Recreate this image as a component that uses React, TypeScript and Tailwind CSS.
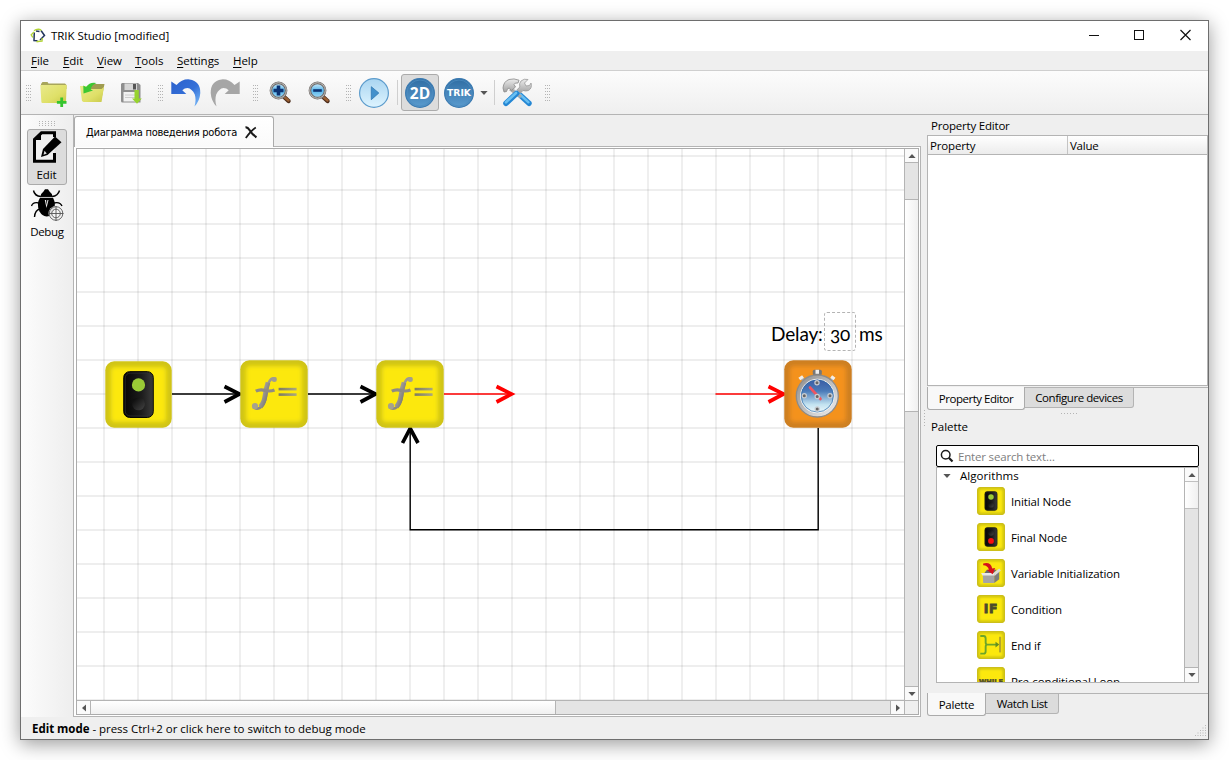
import React from "react";

const ARROW_POINTS: Record<string, string> = {
  up: "0,5 4.5,0 9,5",
  down: "0,0 9,0 4.5,5",
  left: "5,0 5,9 0,4.5",
  right: "0,0 5,4.5 0,9",
};

function Arrow({ dir }: { dir: "up" | "down" | "left" | "right" }) {
  const vertical = dir === "up" || dir === "down";
  const w = vertical ? 9 : 5;
  const h = vertical ? 5 : 9;
  return (
    <svg width={vertical ? 8 : 4} height={vertical ? 4 : 8} viewBox={`0 0 ${w} ${h}`} className="block">
      <polygon points={ARROW_POINTS[dir]} fill="#555" />
    </svg>
  );
}

function Dots({ cols, rows, dx, dy, className = "" }: { cols: number; rows: number; dx: number; dy: number; className?: string }) {
  const cells: React.ReactNode[] = [];
  for (let r = 0; r < rows; r++)
    for (let c = 0; c < cols; c++) cells.push(<rect key={`${r}-${c}`} x={c * dx} y={r * dy} width="1" height="1" fill="#b4b4b4" />);
  return (
    <svg width={(cols - 1) * dx + 1} height={(rows - 1) * dy + 1} className={`block shrink-0 ${className}`}>
      {cells}
    </svg>
  );
}

function Grip({ className = "" }: { className?: string }) {
  return <Dots cols={3} rows={6} dx={2} dy={3} className={className} />;
}

function Defs() {
  return (
    <svg width="0" height="0" className="absolute">
      <defs>
        <filter id="soft" x="-20%" y="-20%" width="140%" height="140%">
          <feGaussianBlur stdDeviation="2" />
        </filter>
        <linearGradient id="folder" x1="0" y1="0" x2="1" y2="1">
          <stop offset="0" stopColor="#e9ea8c" />
          <stop offset="0.6" stopColor="#dfe068" />
          <stop offset="1" stopColor="#c9c94a" />
        </linearGradient>
        <linearGradient id="undo" x1="0" y1="0" x2="1" y2="1">
          <stop offset="0" stopColor="#2b60cc" />
          <stop offset="0.55" stopColor="#3470d8" />
          <stop offset="1" stopColor="#7fc0fb" />
        </linearGradient>
        <linearGradient id="lens" x1="0" y1="0" x2="0" y2="1">
          <stop offset="0" stopColor="#d9f0fb" />
          <stop offset="0.5" stopColor="#55b4ea" />
          <stop offset="1" stopColor="#a5dcf7" />
        </linearGradient>
        <linearGradient id="play" x1="0" y1="0" x2="0" y2="1">
          <stop offset="0" stopColor="#a9d5f1" />
          <stop offset="1" stopColor="#def4ff" />
        </linearGradient>
        <linearGradient id="badge" x1="0" y1="0" x2="0" y2="1">
          <stop offset="0" stopColor="#2f6da3" />
          <stop offset="1" stopColor="#5b9ccf" />
        </linearGradient>
        <linearGradient id="steel" x1="0" y1="0" x2="0" y2="1">
          <stop offset="0" stopColor="#ececec" />
          <stop offset="1" stopColor="#a2a2a2" />
        </linearGradient>
        <linearGradient id="glyph" x1="0" y1="0" x2="1" y2="1">
          <stop offset="0" stopColor="#bcb9b2" />
          <stop offset="0.5" stopColor="#96928c" />
          <stop offset="1" stopColor="#6c6c66" />
        </linearGradient>
        <linearGradient id="bar" x1="0" y1="0" x2="1" y2="0">
          <stop offset="0" stopColor="#7d7b60" />
          <stop offset="1" stopColor="#aaa87e" />
        </linearGradient>
        <linearGradient id="lamp" x1="0" y1="0" x2="1" y2="0">
          <stop offset="0" stopColor="#050505" />
          <stop offset="0.6" stopColor="#1c1c1c" />
          <stop offset="1" stopColor="#3c3c3c" />
        </linearGradient>
        <linearGradient id="bulb" x1="0" y1="0" x2="1" y2="1">
          <stop offset="0" stopColor="#050505" />
          <stop offset="1" stopColor="#444" />
        </linearGradient>
        <linearGradient id="rim" x1="0" y1="0" x2="1" y2="1">
          <stop offset="0" stopColor="#8a8a8a" />
          <stop offset="0.5" stopColor="#bdbdbd" />
          <stop offset="1" stopColor="#f4f4f4" />
        </linearGradient>
        <linearGradient id="dial" x1="0" y1="0" x2="0" y2="1">
          <stop offset="0.05" stopColor="#3c5fa6" />
          <stop offset="0.35" stopColor="#4a7ab8" />
          <stop offset="0.75" stopColor="#c2e2f0" />
          <stop offset="1" stopColor="#eef9fc" />
        </linearGradient>
      </defs>
    </svg>
  );
}

/* Toolbar icons */

function NewIcon() {
  return (
    <svg width="32" height="32" viewBox="0 0 32 32">
      <path d="M3 7 L4.500 5 H9.500 L10.500 6.500 H27 L28.500 8 V12 H3 Z" fill="#a8a65a" />
      <path d="M2.300 8 H28.700 L28 24.800 Q27.900 26 27 26 H4.500 Q3.500 26 3.400 25 Z" fill="url(#folder)" />
      <path d="M23.700 20.500 V30 M18.900 25.300 H28.500" stroke="#35c42e" strokeWidth="2.800" fill="none" />
    </svg>
  );
}

function OpenIcon() {
  return (
    <svg width="30" height="32" viewBox="0 0 30 32">
      <path d="M13 7 H26.500 L23 24 H10 Z" fill="#a09c50" />
      <path d="M2 9 H8 L11 12 H23.500 L26 10 L23.500 25 H5.500 L4 24 Z" fill="url(#folder)" />
      <path d="M5.500 16.500 L5.300 8.500 L8 10 Q12 4.500 18.500 6 Q13 8 12.800 12.500 L15 13.500 Z" fill="#3cc832" />
    </svg>
  );
}

function SaveIcon() {
  return (
    <svg width="26" height="32" viewBox="0 0 26 32">
      <path d="M4 6 H20 L22.500 8 V25.500 H4.500 Q3 25.500 3 24 V7 Z" fill="#8e8e8e" />
      <rect x="6.500" y="6.500" width="12.500" height="6.500" fill="#d6d6d6" />
      <rect x="15" y="7" width="3" height="5.500" fill="#555" />
      <rect x="5.500" y="15" width="14.500" height="9.500" fill="#f1f1f1" />
      <path d="M7 18 H18 M7 20.500 H18" stroke="#ccc" />
      <path d="M16.500 13 H20.800 V21.500 H23.800 L19 26.800 L14 21.500 H16.500 Z" fill="#96d32e" />
    </svg>
  );
}

function UndoIcon({ flip = false }: { flip?: boolean }) {
  return (
    <svg width="32" height="32" viewBox="0 0 32 32">
      <path
        transform={flip ? "translate(32 0) scale(-1 1)" : undefined}
        d="M1.300 4.500 L6.500 8 Q12 1.800 19.500 2.400 Q30.500 4 30.300 16 Q29.800 24 24.500 29.500 Q26.500 23 24.800 17.500 Q22 11.500 17.500 11 Q14.500 11 12.300 13.300 L16.300 17 H1.300 Z"
        fill={flip ? "#a6a6a6" : "url(#undo)"}
      />
    </svg>
  );
}

function ZoomIcon({ plus = false }: { plus?: boolean }) {
  return (
    <svg width="24" height="26" viewBox="0 0 24 26">
      <path d="M14 15 L20.500 21" stroke="#4a2a18" strokeWidth="4.400" strokeLinecap="round" />
      <path d="M17 17.500 L20.500 20.500" stroke="#9a6034" strokeWidth="2.500" strokeLinecap="round" />
      <path d="M14 15 L16.500 17.300" stroke="#777" strokeWidth="3.500" />
      <circle cx="10.500" cy="10.500" r="7.600" fill="url(#lens)" stroke="#6e6a68" strokeWidth="2.600" />
      <circle cx="10.500" cy="10.500" r="7.800" fill="none" stroke="#c4c0bc" strokeWidth="1" />
      <path d={plus ? "M5.500 10.500 H15.500 M10.500 5.500 V15.500" : "M6.200 10.500 H14.800"} stroke="#0c3273" strokeWidth={plus ? 3.600 : 2.600} />
    </svg>
  );
}

function PlayIcon() {
  return (
    <svg width="32" height="32" viewBox="0 0 32 32">
      <circle cx="16" cy="16" r="14.400" fill="url(#play)" stroke="#5d9ccc" strokeWidth="1.200" />
      <path d="M13.300 9.700 L20.800 16 L13.300 22.700 Z" fill="#4391cc" stroke="#2f78b4" strokeWidth="0.800" />
    </svg>
  );
}

function Badge({ text, size, family }: { text: string; size: number; family: string }) {
  return (
    <svg width="32" height="32" viewBox="0 0 32 32">
      <circle cx="16" cy="16" r="14.400" fill="url(#badge)" stroke="#3c7bb1" strokeWidth="1.200" />
      <circle cx="16" cy="16" r="13" fill="none" stroke="#4d8bbf" strokeWidth="0.800" />
      <text x="16" y={16 + size * 0.36} textAnchor="middle" fontFamily={family} fontWeight="bold" fontSize={size} letterSpacing="0" fill="#fff">
        {text}
      </text>
    </svg>
  );
}

function ToolsIcon() {
  return (
    <svg width="32" height="32" viewBox="0 0 32 32">
      <path d="M12 11 L15.500 14 L19 17 L16 20 L10 14 Z" fill="#c8c8c8" />
      <path d="M19 18 L28 26.300" stroke="#2487d4" strokeWidth="5.400" strokeLinecap="round" />
      <path d="M19 17.500 L27.500 25.300" stroke="#69bff2" strokeWidth="2.400" strokeLinecap="round" />
      <path d="M9 12 L20 20" stroke="#a8a8a8" strokeWidth="3" />
      <path d="M2 11 Q2.500 4.500 8 2.500 Q13 1 18 3.200 L17 6 Q13.500 5.500 13 7.500 L14.500 10 L10.500 13.500 L8.500 11.300 Q6.500 10 5.500 14.500 L3 15 Z" fill="url(#steel)" stroke="#888" strokeWidth="0.800" />
      <path d="M20 4 Q23 1.300 27 2.500 L23.500 6 L25 9 L28.500 8.500 L30 6 Q31.500 11 27.500 13.500 Q24.500 14.500 22 13.500 L19.500 16 L16 12.800 L18.800 10 Q17.800 6.500 20 4 Z" fill="url(#steel)" stroke="#999" strokeWidth="0.800" />
      <path d="M15.500 16.500 L5 26.300" stroke="#2487d4" strokeWidth="5.600" strokeLinecap="round" />
      <path d="M15 16 L5 25.300" stroke="#69bff2" strokeWidth="2.600" strokeLinecap="round" />
    </svg>
  );
}

function Sep() {
  return <div className="h-[25px] w-px shrink-0 bg-[#cfcfcf]" />;
}

/* Block icons share one 68 by 68 drawing */

function Block({ size, kind, className = "" }: { size: number; kind: string; className?: string }) {
  const orange = kind === "timer";
  const small = size < 40;
  return (
    <svg width={size} height={size} viewBox="0 0 68 68" className={`block shrink-0 ${className}`}>
      <rect x="0.300" y="0.300" width="67.400" height="67.400" rx="9" fill={orange ? "#cd7f22" : "#d0c417"} />
      <rect x="6" y="6" width="56" height="56" rx="4" fill={orange ? "#f4921f" : "#fce80b"} filter="url(#soft)" />
      {small && <rect x="1.300" y="1.300" width="65.400" height="65.400" rx="8" fill="none" stroke="#cdbf1a" strokeWidth="2.500" />}
      {(kind === "start" || kind === "end") && (
        <g>
          <rect x="19" y="10.800" width="30" height="46.500" rx="6" fill="url(#lamp)" stroke="#000" />
          <rect x="20.500" y="12.300" width="27" height="43.500" rx="5" fill="none" stroke="#333" strokeWidth="0.700" />
          <circle cx="34" cy="24.300" r="6.700" fill={kind === "start" ? "#9acb36" : "url(#bulb)"} />
          <circle cx="34" cy="43.500" r={kind === "end" ? 7 : 6.500} fill={kind === "end" ? "#fa0d0d" : "url(#bulb)"} />
        </g>
      )}
      {kind === "func" && (
        <g>
          <path d="M36 19 Q31.500 17 29 22 Q27 27 26 36 Q24.500 45.500 19.500 48 Q16 49.500 13 47" fill="none" stroke="url(#glyph)" strokeWidth="2.600" />
          <path d="M28 22.500 Q26 28 25 36 Q24 43 20.300 46.800" fill="none" stroke="url(#glyph)" strokeWidth="4.800" />
          <circle cx="34.300" cy="19.600" r="2.500" fill="#a19d90" />
          <circle cx="15" cy="46" r="3.100" fill="#a6a28e" />
          <path d="M15.800 31.200 Q20 29 25 30.400 T34.500 30" fill="none" stroke="#8f8b84" strokeWidth="3.200" />
          <rect x="38.600" y="27.800" width="18" height="2.600" fill="url(#bar)" />
          <rect x="38.600" y="33.300" width="18" height="2.600" fill="url(#bar)" />
        </g>
      )}
      {kind === "timer" && (
        <g>
          <path d="M17 17 L21 22 M49.500 17 L45.500 22" stroke="#aaa" strokeWidth="3" />
          <path d="M15.300 19 L19 16.500 M47.200 16.500 L50.500 19" stroke="#f2ede6" strokeWidth="3.200" />
          <rect x="28.800" y="9.800" width="9" height="5.500" rx="1.500" fill="#777" />
          <rect x="31.500" y="9.800" width="3.500" height="4" fill="#eee" />
          <circle cx="33.300" cy="36" r="21" fill="url(#rim)" stroke="#8b8b8b" strokeWidth="1.300" />
          <circle cx="33.300" cy="36" r="16.800" fill="url(#dial)" stroke="#f0f0f0" strokeWidth="1" />
          <circle cx="33.300" cy="36" r="16" fill="none" stroke="#2c6ca8" strokeWidth="0.700" />
          <path d="M26 27.500 L36.500 39" stroke="#ef5560" strokeWidth="2.600" strokeLinecap="round" />
          {[[33, 22.800], [20.300, 35.800], [46, 35.800], [33.200, 49], [33.200, 36.500]].map(([x, y]) => (
            <circle key={`${x}-${y}`} cx={x} cy={y} r="2.100" fill="#666" stroke="#c9cdd2" strokeWidth="1.200" />
          ))}
        </g>
      )}
      {kind === "var" && (
        <g>
          <path d="M14 36 H42 V58 H15 Z" fill="#a4a4a4" />
          <path d="M42 38 L54 30 V49 L42 58 Z" fill="#7c7c7c" />
          <path d="M18 34 L24 26 H48 L41 34 Z" fill="#6a6a6a" />
          <path d="M10 34 H40 L44 40 H13 Z" fill="#e8e8e8" />
          <path d="M40 34 L54 23 L58 28 L44 40 Z" fill="#dadada" />
          <path d="M15 11 Q33 6 37 23 L44 22 L38 37 L24 27 L29 26 Q26 15 15 15 Z" fill="#d5111b" />
        </g>
      )}
      {kind === "endif" && (
        <g fill="none">
          <path d="M8 12 H16 Q21 12 21 18 V28 Q21 33 25 33 H50 M25 33 Q21 33 21 38 V49 Q21 55 16 55 H8" stroke="#6ca529" strokeWidth="4.600" />
          <path d="M45 26 L54 33 L45 40 Z" fill="#648e1e" />
          <path d="M56 14 V52" stroke="#b5a62c" strokeWidth="5" />
        </g>
      )}
      {(kind === "if" || kind === "while") && (
        <text
          x="34"
          y={kind === "if" ? 44 : 42}
          textAnchor="middle"
          fontFamily="'DejaVu Sans', sans-serif"
          fontWeight="bold"
          fontSize={kind === "if" ? 30 : 16}
          letterSpacing={kind === "if" ? 2 : 0}
          fill="#4c4a2c"
          stroke="#4c4a2c"
          strokeWidth={kind === "if" ? 2 : 1}
        >
          {kind === "if" ? "IF" : "WHILE"}
        </text>
      )}
    </svg>
  );
}

function Diagram() {
  const vertical = Array.from({ length: 24 }, (_, i) => 104 + i * 34);
  const horizontal = Array.from({ length: 17 }, (_, i) => 156 + i * 34);
  return (
    <div className="relative h-[551px] w-[827px] overflow-hidden bg-white">
      <svg width="827" height="551" viewBox="77 149 827 551" className="block">
        <g stroke="#000" strokeOpacity="0.090" strokeWidth="1.400">
          {vertical.map((x) => (
            <line key={x} x1={x} x2={x} y1="149" y2="700" />
          ))}
          {horizontal.map((y) => (
            <line key={y} x1="77" x2="904" y1={y} y2={y} />
          ))}
        </g>
        <g fill="none" stroke="#000" strokeWidth="1.400">
          <path d="M172 394 H240 M308 394 H376 M818.200 428 V529.800 H410.200 V430" />
          <path d="M224.500 386.500 L239.500 394 L224.500 402 M360.500 386.500 L375.500 394 L360.500 402 M402.500 443 L410.200 428.500 L418 443" strokeWidth="3.700" />
        </g>
        <g fill="none" stroke="#f00" strokeWidth="1.400">
          <path d="M444 394 H512 M715.500 394 H784" />
          <path d="M496.500 386.500 L511.500 394 L496.500 402 M768.500 386.500 L783.500 394 L768.500 402" strokeWidth="3.700" />
        </g>
      </svg>
      <Block size={67} kind="start" className="absolute left-[27.500px] top-[211.500px]" />
      <Block size={68} kind="func" className="absolute left-[163px] top-[211px]" />
      <Block size={68} kind="func" className="absolute left-[299px] top-[211px]" />
      <Block size={68} kind="timer" className="absolute left-[707px] top-[211px]" />
      <div className="absolute left-[694px] top-[163px] flex h-[39px] items-center font-[Lato] text-[19px] tracking-[-0.150px] text-black">
        <span className="w-[53px] pt-[5px]">Delay:</span>
        <span className="flex h-[39px] w-[32px] items-center justify-center rounded-[3px] border border-dashed border-[#b4b4b4] pt-[5px] oldstyle-nums">30</span>
        <span className="ml-[3px] pt-[5px]">ms</span>
      </div>
    </div>
  );
}

function SideTools() {
  return (
    <div className="flex w-[52px] flex-col items-center bg-linear-to-r from-[#fcfcfc] to-[#eeeeee]">
      <Dots cols={6} rows={3} dx={3} dy={2} className="mt-[6px]" />
      <div className="mt-[3px] flex h-[56px] w-[40px] flex-col items-center rounded-[3px] border border-[#ababab] bg-[#dcdcdc]">
        <svg width="32" height="36" viewBox="2 1 32 36" className="block">
          <path d="M25.500 8 V3.800 H12.500 L5.500 10.500 V32.300 H25.500 V24" fill="#f0f0f0" stroke="#000" strokeWidth="3" />
          <path d="M4.500 10.500 L12 3 V11 H4.500 Z" fill="#000" />
          <path d="M26 7.500 L32.500 13.300 L18.500 26 L12 28 L14 20 Z" fill="#000" />
          <path d="M15.500 21.800 L17.800 24.600 L14.500 25.800 Z" fill="#ddd" />
        </svg>
        <span className="-ml-px mt-[1px] text-[11.500px] leading-[16px]">Edit</span>
      </div>
      <svg width="36" height="36" viewBox="0 0 36 36" className="mt-[2px] block">
        <g fill="none" stroke="#000" strokeWidth="1.400">
          <path d="M12 9.500 Q5.500 9 4.500 3.500 M23 9.500 Q29 9 30.500 3.500 M10 16 Q4 14.500 2.500 19 M25 16 Q31 14.500 33 19 M11 22 Q6 23 5.500 30" />
        </g>
        <path d="M11.500 10 Q12 6 14.500 4.500 L16 2.200 H19 L20.500 4.500 Q23 6 23.500 10 Z" fill="#000" />
        <path d="M11 10.800 H24 Q27.500 17 24.500 24 Q21.500 29.500 17.500 29.500 Q13 29 10.500 24.500 Q7 17 11 10.800 Z" fill="#000" />
        <path d="M11 10.400 H24" stroke="#bbb" strokeWidth="0.600" />
        <path d="M15.800 13 H19.500 L17.500 21 Z" fill="#eee" />
        <path d="M17 12.500 H18.500 L17.600 18 Z" fill="#000" />
        <circle cx="27" cy="26.500" r="7.500" fill="#f4f4f4" fillOpacity="0.930" />
        <g fill="none" stroke="#555" strokeWidth="0.900">
          <circle cx="27" cy="26.500" r="6.800" />
          <circle cx="27" cy="26.500" r="4.300" />
          <path d="M27 19 V34 M19.500 26.500 H34.500" />
        </g>
      </svg>
      <span className="mt-px text-[11.500px] leading-[16px] tracking-[-0.300px]">Debug</span>
    </div>
  );
}

const PALETTE = [
  { kind: "start", label: "Initial Node" },
  { kind: "end", label: "Final Node" },
  { kind: "var", label: "Variable Initialization" },
  { kind: "if", label: "Condition" },
  { kind: "endif", label: "End if" },
  { kind: "while", label: "Pre-conditional Loop" },
];

function RightDock() {
  return (
    <div className="flex w-[287px]">
      <div className="flex w-[6px] justify-center pt-[295px]">
        <Dots cols={1} rows={6} dx={2} dy={3} />
      </div>
      <div className="flex w-[281px] flex-col">
        <div className="flex h-[20px] items-center pl-1 pt-[2px] tracking-[-0.200px]">Property Editor</div>
        <div className="h-[251px] border border-[#b4b4b4] bg-white">
          <div className="flex h-[19px] border-b border-[#b4b4b4] bg-linear-to-b from-white to-[#ececec] leading-[19px]">
            <div className="w-[140px] border-r border-[#c4c4c4] pl-[2px] tracking-[-0.150px]">Property</div>
            <div className="pl-[2px] tracking-[-0.250px]">Value</div>
          </div>
        </div>
        <div className="mt-px flex h-[23px] items-start">
          <div className="flex h-[23px] w-[98px] items-center justify-center rounded-b-[3px] border border-t-0 border-[#ababab] bg-[#f8f8f8] pb-px pt-[2px]">
            <span className="tracking-[-0.480px]">Property Editor</span>
          </div>
          <div className="flex h-[21px] w-[109px] items-center justify-center rounded-br-[3px] border border-l-0 border-[#b4b4b4] bg-[#dcdcdc] tracking-[-0.450px]">Configure devices</div>
          <div className="h-px grow bg-[#b4b4b4]" />
        </div>
        <Dots cols={6} rows={1} dx={3} dy={2} className="ml-[134px] mt-[3px]" />
        <div className="mt-[5px] h-[16px] pl-1 leading-[16px]">Palette</div>
        <div className="ml-[9px] mt-[10px] flex h-[22px] w-[263px] items-center rounded-[2px] border border-black bg-white">
          <svg width="14" height="14" viewBox="0 0 14 14" className="ml-[3px] shrink-0">
            <circle cx="5.700" cy="5.700" r="4.300" fill="none" stroke="#1c1c1c" strokeWidth="1.500" />
            <path d="M8.800 8.800 L12.500 12.500" stroke="#1c1c1c" strokeWidth="2.200" />
          </svg>
          <span className="ml-1 pt-[2px] tracking-[-0.180px] text-[#808080]">Enter search text…</span>
        </div>
        <div className="ml-[9px] flex h-[216px] w-[263px] border border-[#b4b4b4] bg-white">
          <div className="grow overflow-hidden">
            <div className="flex h-[16px] items-center pl-[6px]">
              <Arrow dir="down" />
              <span className="ml-[9px] tracking-[0.050px]">Algorithms</span>
            </div>
            {PALETTE.map((item) => (
              <div key={item.label} className="flex h-[36px] items-center pb-[2px] pl-[40px]">
                <Block size={28} kind={item.kind} />
                <span className="ml-[6px] whitespace-nowrap pt-px tracking-[-0.120px]">{item.label}</span>
              </div>
            ))}
          </div>
          <div className="flex w-[14px] flex-col border-l border-[#b4b4b4] bg-[#e4e4e4]">
            <div className="flex h-[13px] items-center justify-center bg-[#fafafa]">
              <Arrow dir="up" />
            </div>
            <div className="h-[28px] border-y border-[#c0c0c0] bg-linear-to-r from-white to-[#f0f0f0]" />
            <div className="mt-auto flex h-[15px] items-center justify-center border-t border-[#b4b4b4] bg-[#fafafa]">
              <Arrow dir="down" />
            </div>
          </div>
        </div>
        <div className="mt-[10px] flex items-start">
          <div className="flex h-[23px] w-[59px] items-center justify-center rounded-b-[3px] border border-t-0 border-[#ababab] bg-[#f8f8f8] pt-px tracking-[-0.250px]">Palette</div>
          <div className="flex h-[21px] w-[73px] items-center justify-center rounded-br-[3px] border border-l-0 border-[#b4b4b4] bg-[#dcdcdc] tracking-[-0.450px]">Watch List</div>
          <div className="h-px grow bg-[#b4b4b4]" />
        </div>
      </div>
    </div>
  );
}

function Center() {
  return (
    <div className="flex w-[848px] flex-col border-l border-[#b4b4b4]">
      <div className="flex h-[32px] items-end">
        <div className="mt-px flex h-[31px] w-[200px] items-center rounded-t-[3px] border border-b-0 border-[#ababab] bg-linear-to-b from-white to-[#fafafa] pl-[11px]">
          <span className="whitespace-nowrap pt-[3px] font-['DejaVu_Sans_Condensed','DejaVu_Sans',sans-serif] text-[11px] tracking-[-0.250px]">Диаграмма поведения робота</span>
          <svg width="14" height="14" viewBox="0 0 14 14" className="ml-[7px] mt-px shrink-0">
            <path d="M1.500 1.500 Q3.500 1 5.500 4 Q8.500 9 12.500 11.200" fill="none" stroke="#1a1a1a" strokeWidth="2.200" />
            <path d="M11.800 1.500 Q7.500 4 1.800 12" fill="none" stroke="#1a1a1a" strokeWidth="1.800" />
          </svg>
        </div>
        <div className="h-px grow bg-[#b4b4b4]" />
      </div>
      <div className="h-[570px] border-b border-r border-[#b4b4b4] bg-white pl-[2px] pt-px">
        <div className="flex h-[567px] w-[843px] flex-col border border-[#ababab]">
          <div className="flex h-[551px]">
            <Diagram />
            <div className="flex w-[14px] flex-col border-l border-[#b4b4b4] bg-[#e4e4e4]">
              <div className="flex h-[14px] items-center justify-center border-b border-[#b4b4b4] bg-[#fafafa]">
                <Arrow dir="up" />
              </div>
              <div className="mt-[36px] h-[213px] border-y border-[#b4b4b4] bg-linear-to-r from-white to-[#f0f0f0]" />
              <div className="mt-auto flex h-[14px] items-center justify-center border-t border-[#b4b4b4] bg-[#fafafa]">
                <Arrow dir="down" />
              </div>
            </div>
          </div>
          <div className="flex h-[14px] border-t border-[#b4b4b4] bg-[#e4e4e4]">
            <div className="flex w-[14px] items-center justify-center border-r border-[#b4b4b4] bg-[#fafafa]">
              <Arrow dir="left" />
            </div>
            <div className="w-[465px] border-r border-[#b4b4b4] bg-linear-to-b from-white to-[#f0f0f0]" />
            <div className="ml-auto flex w-[15px] items-center justify-center border-x border-[#b4b4b4] bg-[#fafafa]">
              <Arrow dir="right" />
            </div>
            <div className="w-[13px] bg-[#efefef]" />
          </div>
        </div>
      </div>
    </div>
  );
}

const MENUS = [
  { label: "File", margin: "ml-[10px] w-[32px]" },
  { label: "Edit", margin: "w-[34px]" },
  { label: "View", margin: "w-[38px]" },
  { label: "Tools", margin: "w-[42px]" },
  { label: "Settings", margin: "w-[56px]" },
  { label: "Help", margin: "w-[40px]" },
];

export default function App() {
  return (
    <div className="h-[760px] w-[1229px] overflow-hidden bg-white pl-[20px] pt-[20px] font-['Open_Sans','Noto_Sans',sans-serif] text-[11.500px] tracking-[-0.050px] text-black">
      <Defs />
      <div className="flex h-[720px] w-[1189px] flex-col border border-[#6e6e6e] bg-[#efefef] shadow-[0_4px_18px_rgba(0,0,0,0.400)]">
        <div className="flex h-[30px] items-center bg-white">
          <svg width="16" height="16" viewBox="0 0 16 16" className="ml-[9px] mb-px">
            <path d="M4.300 4.500 L4 12.500 L7.500 12.700 M6 3 L9.500 3.500 M11 2.500 L14.500 7.500 L10 12" fill="none" stroke="#22355c" strokeWidth="1.500" />
            <path d="M4 2.800 Q6 1.200 8.500 1.300 Q11 1.200 11 2.800 M4 4 L1.200 6.800 L2.800 9.500 M6.500 13.800 L9.500 13.300 L12 13.200 L12.300 10" fill="none" stroke="#b2d437" strokeWidth="1.400" />
          </svg>
          <span className="ml-[5px] text-[11.500px]">TRIK Studio [modified]</span>
          <svg width="120" height="12" viewBox="0 0 120 12" className="mb-[2px] ml-auto mr-[14px]" fill="none" stroke="#111" strokeWidth="1">
            <path d="M15 6.500 H25" />
            <rect x="60.500" y="1.500" width="9" height="9" />
            <path d="M106.500 1 L116.500 11 M116.500 1 L106.500 11" strokeWidth="1.200" />
          </svg>
        </div>
        <div className="flex h-[20px] items-center border-b border-[#cfcfcf] bg-[#efefef]">
          {MENUS.map((m) => (
            <span key={m.label} className={m.margin}>
              <span className="underline underline-offset-2">{m.label[0]}</span>
              {m.label.slice(1)}
            </span>
          ))}
        </div>
        <div className="flex h-[44px] items-center border-b border-[#b4b4b4] bg-linear-to-b from-[#fcfcfc] to-[#efefef]">
          <Grip className="ml-[5px]" />
          <div className="ml-[7px]"><NewIcon /></div>
          <div className="ml-[8px]"><OpenIcon /></div>
          <div className="ml-[10px]"><SaveIcon /></div>
          <Grip className="ml-[14px]" />
          <div className="ml-[7px]"><UndoIcon /></div>
          <div className="ml-[7px]"><UndoIcon flip /></div>
          <Grip className="ml-[12px]" />
          <div className="ml-[10px]"><ZoomIcon plus /></div>
          <div className="ml-[15px]"><ZoomIcon /></div>
          <Grip className="ml-[15px] mr-[7px]" />
          <PlayIcon />
          <div className="ml-[7px] mr-[3px]"><Sep /></div>
          <div className="flex h-[37px] w-[38px] items-center justify-center rounded-[3px] border border-[#ababab] bg-[#dcdcdc]">
            <Badge text="2D" size={15.500} family="'Open Sans', sans-serif" />
          </div>
          <div className="ml-[4px] mr-[5px]"><Badge text="TRIK" size={9.200} family="'DejaVu Sans', sans-serif" /></div>
          <Arrow dir="down" />
          <div className="ml-[6px] mr-[6px]"><Sep /></div>
          <ToolsIcon />
          <Grip className="ml-[12px]" />
        </div>
        <div className="flex h-[602px]">
          <SideTools />
          <Center />
          <RightDock />
        </div>
        <div className="flex h-[22px] items-center justify-between pl-[11px]">
          <span className="pt-[2px] tracking-[-0.030px]">
            <b>Edit mode</b> - press Ctrl+2 or click here to switch to debug mode
          </span>
          <svg width="12" height="12" viewBox="0 0 12 12" className="mb-[2px] mr-[1px] self-end" fill="#b8b8b8">
            {[0, 1, 2, 3, 4].map((r) =>
              Array.from({ length: r + 1 }, (_, c) => <rect key={`${r}-${c}`} x={10 - c * 2.500} y={r * 2.500} width="1" height="1" />)
            )}
          </svg>
        </div>
      </div>
    </div>
  );
}
